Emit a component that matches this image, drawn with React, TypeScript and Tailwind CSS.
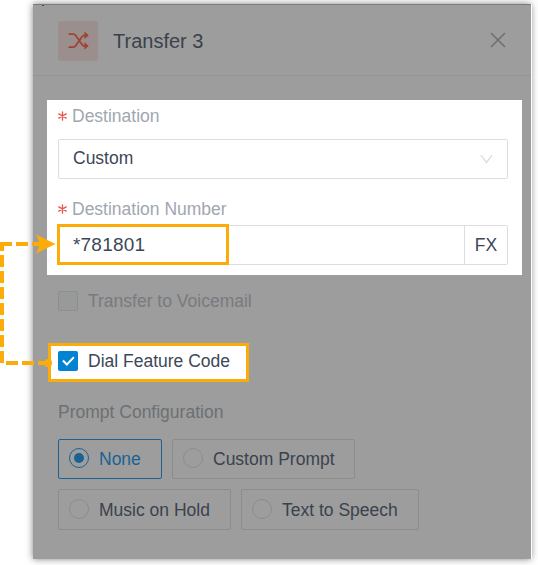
type PromptOption = {
  label: string;
  boxClass: string;
  selected?: boolean;
};

const promptRows: PromptOption[][] = [
  [
    { label: "None", boxClass: "w-[104px] h-10", selected: true },
    { label: "Custom Prompt", boxClass: "w-[183px] h-10" },
  ],
  [
    { label: "Music on Hold", boxClass: "w-[173px] h-[41px]" },
    { label: "Text to Speech", boxClass: "w-[178px] h-[41px]" },
  ],
];

function RequiredLabel({ text }: { text: string }) {
  return (
    <div className="flex items-center h-6 text-[#a0a7af]">
      <svg className="w-[9px] h-[10px] mr-[5px]" viewBox="0 0 9 10" stroke="#ee5548" strokeWidth="1.3" strokeLinecap="round">
        <path d="M4.5 0.8v8.4M0.8 2.9l7.4 4.2M8.2 2.9L0.8 7.1" />
      </svg>
      <span>{text}</span>
    </div>
  );
}

function RadioBox({ option }: { option: PromptOption }) {
  const { label, boxClass, selected } = option;
  return (
    <div
      className={`flex items-center rounded-[2px] border pl-[10px] ${boxClass} ${
        selected ? "border-[#1b6293] text-[#1b6293]" : "border-[#8c8c8d] text-[#3a424d]"
      }`}
    >
      <span
        className={`w-5 h-5 rounded-full border flex items-center justify-center shrink-0 mb-[2px] ${
          selected ? "border-[#1b6293]" : "border-[#8c8c8d]"
        }`}
      >
        {selected && <span className="w-[10px] h-[10px] rounded-full bg-[#1b6293]" />}
      </span>
      <span className="ml-[10px]">{label}</span>
    </div>
  );
}

export default function App() {
  return (
    <div className="relative w-[538px] h-[565px] overflow-hidden bg-white pt-1 pl-[33px] font-['Liberation_Sans',Arial,sans-serif] text-[17.5px] leading-6 whitespace-nowrap">
      <div className="w-[498px] h-[555px] bg-[#9d9d9d] border-t border-[#7b7b7b] shadow-[1px_0_0_#fff,0_0_7px_rgba(0,0,0,0.5)]">
        {/* Header */}
        <div className="h-[71px] border-b border-[#939393] flex items-center pl-[25px] pr-[25px]">
          <div className="w-10 h-10 rounded-[3px] bg-[#9b8f8e] mt-px flex items-center justify-center">
            <svg className="w-[21px] h-[19px]" viewBox="0 0 20 18" fill="none" stroke="#a04435" strokeWidth="1.7" strokeLinecap="round" strokeLinejoin="round">
              <path d="M1.2 2.9h4.2l1.8 1.1 6.1 8.8 1.6 1.4h3.6" />
              <path d="M1.2 15.4h4.2l1.8-1.1 6.1-8.8L15 4.1h3.6" />
              <path d="M16.3 1.4l2.8 2.7-2.8 2.7zM16.3 11.5l2.8 2.7-2.8 2.7z" fill="#a04435" strokeWidth="0.9" />
            </svg>
          </div>
          <h1 className="ml-[15px] mt-[2px] text-[20px] text-[#3a424d]">Transfer 3</h1>
          <svg className="ml-auto w-4 h-4" viewBox="0 0 16 16" stroke="#6b6e72" strokeWidth="1.5" strokeLinecap="round">
            <path d="M1.5 1.5l13 13M14.5 1.5l-13 13" />
          </svg>
        </div>

        {/* Destination fields */}
        <div className="mt-6 ml-[14px] w-[475px] h-[175px] bg-white pt-1 pl-[11px] pr-[14px]">
          <RequiredLabel text="Destination" />
          <div className="mt-[11px] h-10 rounded-[2px] border border-[#dcdddf] flex items-center justify-between pl-[14px] pr-[14px] text-[#3d4757]">
            <span className="mb-[2px]">Custom</span>
            <svg className="w-[13px] h-[10px] mb-px" viewBox="0 0 14 10" fill="none" stroke="#dedede" strokeWidth="1.5">
              <path d="M1 .8l6 8 6-8" />
            </svg>
          </div>
          <div className="mt-[18px]">
            <RequiredLabel text="Destination Number" />
          </div>
          <div className="mt-1 h-10 rounded-[2px] border border-[#dcdddf] flex text-[#3d4757]">
            <div className="flex-1 flex items-center pl-[14px] text-[19px] tracking-[0.2px]">*781801</div>
            <div className="w-[43px] border-l border-[#dcdddf] flex items-center justify-center">FX</div>
          </div>
        </div>

        {/* Checkboxes */}
        <div className="mt-[14px] ml-[25px] h-6 flex items-center text-[#777b7f]">
          <span className="w-5 h-5 rounded-[2px] border border-[#8b8f8e] bg-[#989a99]" />
          <span className="ml-[10px]">Transfer to Voicemail</span>
        </div>
        <div className="mt-[30px] ml-[15px] w-[201px] h-[39px] border-[3px] border-[#fbac09] bg-white flex items-center pl-[7px] text-[#3d4757]">
          <span className="w-5 h-5 rounded-[2px] bg-[#0282d2] flex items-center justify-center mb-[3px]">
            <svg className="w-[13px] h-[10px]" viewBox="0 0 13 10" fill="none" stroke="#fff" strokeWidth="2">
              <path d="M.9 4.5l4 4 7-7.4" />
            </svg>
          </span>
          <span className="ml-[10px] mb-[3px]">Dial Feature Code</span>
        </div>

        {/* Prompt options */}
        <div className="ml-[25px] mt-[18px]">
          <div className="text-[#6c7074]">Prompt Configuration</div>
          <div className="mt-[15px] flex flex-col gap-[10px]">
            {promptRows.map((row, i) => (
              <div key={i} className="flex gap-[10px]">
                {row.map((option) => (
                  <RadioBox key={option.label} option={option} />
                ))}
              </div>
            ))}
          </div>
        </div>
      </div>

      {/* Sliver of the canvas node behind the panel's top edge */}
      <div className="absolute left-[42px] top-[5px] w-[2px] h-px bg-[#1b5a85]" />

      {/* Annotation: frame around the number and the dashed connector */}
      <div className="absolute left-[57px] top-[224px] w-[172px] h-[41px] border-[3px] border-[#fbac09]" />
      <svg className="absolute left-0 top-0 w-[60px] h-[380px]" viewBox="0 0 60 380" fill="none" stroke="#fbac09" strokeWidth="4">
        <path d="M50 363H2V242" strokeDasharray="12 4" />
        <path d="M0 244H42" strokeDasharray="12 4" />
        <path d="M36 234.5L55.5 244 36 253.5 40 244z" fill="#fbac09" stroke="none" />
        <circle cx="48" cy="363" r="4" fill="#fbac09" stroke="none" />
      </svg>
    </div>
  );
}
